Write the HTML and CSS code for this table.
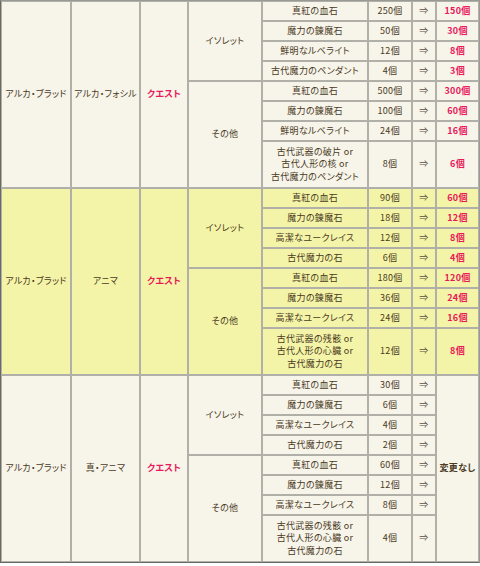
FILE: index.html
```html
<!DOCTYPE html>
<html lang="ja">
<head>
<meta charset="utf-8">
<link rel="stylesheet" href="styles.css">
</head>
<body>
<table class="tbl">
<colgroup>
<col class="c1"><col class="c2"><col class="c3"><col class="c4"><col class="c5"><col class="c6"><col class="c7"><col class="c8">
</colgroup>
<tbody class="cream">
<tr><td rowspan="8">アルカ・ブラッド</td><td rowspan="8">アルカ・フォシル</td><td rowspan="8" class="red">クエスト</td><td rowspan="4">イソレット</td><td>真紅の血石</td><td>250個</td><td class="arw">⇒</td><td class="red">150個</td></tr>
<tr><td>魔力の錬魔石</td><td>50個</td><td class="arw">⇒</td><td class="red">30個</td></tr>
<tr><td>鮮明なルベライト</td><td>12個</td><td class="arw">⇒</td><td class="red">8個</td></tr>
<tr><td>古代魔力のペンダント</td><td>4個</td><td class="arw">⇒</td><td class="red">3個</td></tr>
<tr><td rowspan="4">その他</td><td>真紅の血石</td><td>500個</td><td class="arw">⇒</td><td class="red">300個</td></tr>
<tr><td>魔力の錬魔石</td><td>100個</td><td class="arw">⇒</td><td class="red">60個</td></tr>
<tr><td>鮮明なルベライト</td><td>24個</td><td class="arw">⇒</td><td class="red">16個</td></tr>
<tr class="tall"><td>古代武器の破片 or<br>古代人形の核 or<br>古代魔力のペンダント</td><td>8個</td><td class="arw">⇒</td><td class="red">6個</td></tr>
</tbody>
<tbody class="yellow">
<tr><td rowspan="8">アルカ・ブラッド</td><td rowspan="8">アニマ</td><td rowspan="8" class="red">クエスト</td><td rowspan="4">イソレット</td><td>真紅の血石</td><td>90個</td><td class="arw">⇒</td><td class="red">60個</td></tr>
<tr><td>魔力の錬魔石</td><td>18個</td><td class="arw">⇒</td><td class="red">12個</td></tr>
<tr><td>高潔なユークレイス</td><td>12個</td><td class="arw">⇒</td><td class="red">8個</td></tr>
<tr><td>古代魔力の石</td><td>6個</td><td class="arw">⇒</td><td class="red">4個</td></tr>
<tr><td rowspan="4">その他</td><td>真紅の血石</td><td>180個</td><td class="arw">⇒</td><td class="red">120個</td></tr>
<tr><td>魔力の錬魔石</td><td>36個</td><td class="arw">⇒</td><td class="red">24個</td></tr>
<tr><td>高潔なユークレイス</td><td>24個</td><td class="arw">⇒</td><td class="red">16個</td></tr>
<tr class="tall"><td>古代武器の残骸 or<br>古代人形の心臓 or<br>古代魔力の石</td><td>12個</td><td class="arw">⇒</td><td class="red">8個</td></tr>
</tbody>
<tbody class="cream">
<tr><td rowspan="8">アルカ・ブラッド</td><td rowspan="8">真・アニマ</td><td rowspan="8" class="red">クエスト</td><td rowspan="4">イソレット</td><td>真紅の血石</td><td>30個</td><td class="arw">⇒</td><td rowspan="8" class="bold">変更なし</td></tr>
<tr><td>魔力の錬魔石</td><td>6個</td><td class="arw">⇒</td></tr>
<tr><td>高潔なユークレイス</td><td>4個</td><td class="arw">⇒</td></tr>
<tr><td>古代魔力の石</td><td>2個</td><td class="arw">⇒</td></tr>
<tr><td rowspan="4">その他</td><td>真紅の血石</td><td>60個</td><td class="arw">⇒</td></tr>
<tr><td>魔力の錬魔石</td><td>12個</td><td class="arw">⇒</td></tr>
<tr><td>高潔なユークレイス</td><td>8個</td><td class="arw">⇒</td></tr>
<tr class="tall"><td>古代武器の残骸 or<br>古代人形の心臓 or<br>古代魔力の石</td><td>4個</td><td class="arw">⇒</td></tr>
</tbody>
</table>
</body>
</html>
```
FILE: styles.css
```css
html, body {
  margin: 0;
  padding: 0;
  background: #ffffff;
}
.tbl {
  width: 480px;
  table-layout: fixed;
  border-collapse: separate;
  border-spacing: 0;
  border-top: 1px solid #9a9a94;
  border-left: 1px solid #6a6a64;
  border-right: 1px solid #9a9a94;
  border-bottom: 1px solid #6a6a64;
  font-family: "Noto Sans CJK JP", "Liberation Sans", sans-serif;
  font-size: 9px;
  font-feature-settings: "palt";
  letter-spacing: 0.3px;
  color: #4a3a1e;
  line-height: 12.5px;
}
.c1 { width: 70px; }
.c2 { width: 69px; }
.c3 { width: 48px; }
.c4 { width: 74px; }
.c5 { width: 106px; }
.c6 { width: 44px; }
.c7 { width: 24px; }
.c8 { width: 43px; }
.tbl td {
  border: 1px solid #b0b0a8;
  padding: 0 2px;
  height: 18px;
  text-align: center;
  vertical-align: middle;
  white-space: nowrap;
}
.tbl tr.tall td {
  height: 45px;
}
.cream td { background: #f7f4ea; }
.yellow td { background: #f4f4a8; }
.red {
  color: #e8185a;
  font-weight: bold;
}
.bold {
  font-weight: bold;
}
.arw {
  color: #5a5040;
}
```
